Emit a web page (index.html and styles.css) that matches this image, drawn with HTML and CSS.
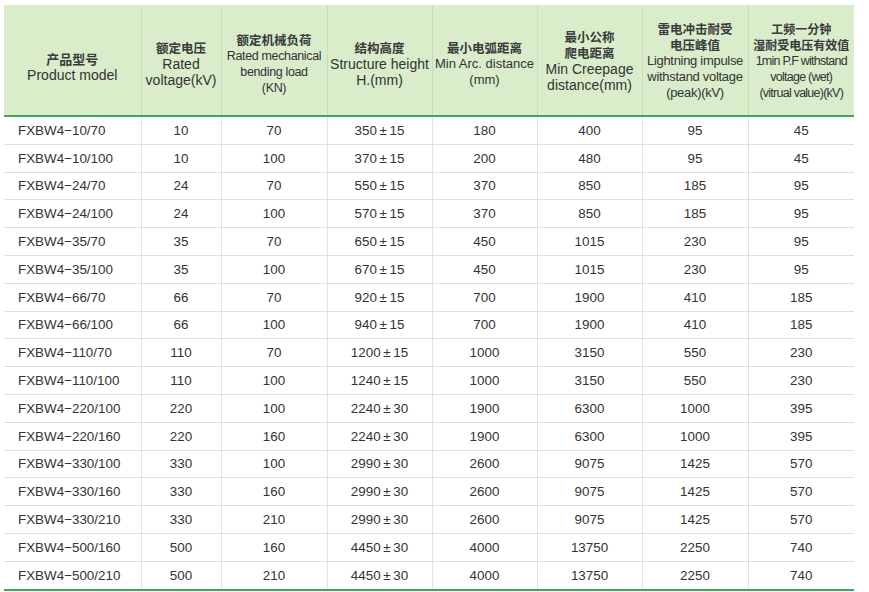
FILE: index.html
```html
<!DOCTYPE html>
<html lang="zh">
<head>
<meta charset="utf-8">
<title>FXBW4</title>
<link rel="stylesheet" href="styles.css">
</head>
<body>
<div class="wrap">
<table class="spec">
  <colgroup>
    <col class="c1"><col class="c2"><col class="c3"><col class="c4"><col class="c5"><col class="c6"><col class="c7"><col class="c8">
  </colgroup>
  <thead>
    <tr>
      <th class="w first"><div class="hd low2"><span class="zh">产品型号</span><span>Product model</span></div></th>
      <th class="w"><div class="hd low1"><span class="zh">额定电压</span><span>Rated</span><span>voltage(kV)</span></div></th>
      <th class="n3"><div class="hd low1"><span class="zh">额定机械负荷</span><span>Rated mechanical</span><span>bending load</span><span>(KN)</span></div></th>
      <th class="w"><div class="hd low1"><span class="zh">结构高度</span><span>Structure height</span><span>H.(mm)</span></div></th>
      <th class="n5"><div class="hd low1"><span class="zh">最小电弧距离</span><span>Min Arc. distance</span><span>(mm)</span></div></th>
      <th class="w"><div class="hd low0"><span class="zh">最小公称</span><span class="zh">爬电距离</span><span>Min Creepage</span><span>distance(mm)</span></div></th>
      <th class="n7"><div class="hd low0"><span class="zh">雷电冲击耐受</span><span class="zh">电压峰值</span><span>Lightning impulse</span><span>withstand voltage</span><span>(peak)(kV)</span></div></th>
      <th class="n8"><div class="hd low0"><span class="zh">工频一分钟</span><span class="zh">湿耐受电压有效值</span><span>1min P.F withstand</span><span>voltage (wet)</span><span>(vitrual value)(kV)</span></div></th>
    </tr>
  </thead>
  <tbody>
    <tr><td>FXBW4−10/70</td><td>10</td><td>70</td><td>350&thinsp;±&thinsp;15</td><td>180</td><td>400</td><td>95</td><td>45</td></tr>
    <tr><td>FXBW4−10/100</td><td>10</td><td>100</td><td>370&thinsp;±&thinsp;15</td><td>200</td><td>480</td><td>95</td><td>45</td></tr>
    <tr><td>FXBW4−24/70</td><td>24</td><td>70</td><td>550&thinsp;±&thinsp;15</td><td>370</td><td>850</td><td>185</td><td>95</td></tr>
    <tr><td>FXBW4−24/100</td><td>24</td><td>100</td><td>570&thinsp;±&thinsp;15</td><td>370</td><td>850</td><td>185</td><td>95</td></tr>
    <tr><td>FXBW4−35/70</td><td>35</td><td>70</td><td>650&thinsp;±&thinsp;15</td><td>450</td><td>1015</td><td>230</td><td>95</td></tr>
    <tr><td>FXBW4−35/100</td><td>35</td><td>100</td><td>670&thinsp;±&thinsp;15</td><td>450</td><td>1015</td><td>230</td><td>95</td></tr>
    <tr><td>FXBW4−66/70</td><td>66</td><td>70</td><td>920&thinsp;±&thinsp;15</td><td>700</td><td>1900</td><td>410</td><td>185</td></tr>
    <tr><td>FXBW4−66/100</td><td>66</td><td>100</td><td>940&thinsp;±&thinsp;15</td><td>700</td><td>1900</td><td>410</td><td>185</td></tr>
    <tr><td>FXBW4−110/70</td><td>110</td><td>70</td><td>1200&thinsp;±&thinsp;15</td><td>1000</td><td>3150</td><td>550</td><td>230</td></tr>
    <tr><td>FXBW4−110/100</td><td>110</td><td>100</td><td>1240&thinsp;±&thinsp;15</td><td>1000</td><td>3150</td><td>550</td><td>230</td></tr>
    <tr><td>FXBW4−220/100</td><td>220</td><td>100</td><td>2240&thinsp;±&thinsp;30</td><td>1900</td><td>6300</td><td>1000</td><td>395</td></tr>
    <tr><td>FXBW4−220/160</td><td>220</td><td>160</td><td>2240&thinsp;±&thinsp;30</td><td>1900</td><td>6300</td><td>1000</td><td>395</td></tr>
    <tr><td>FXBW4−330/100</td><td>330</td><td>100</td><td>2990&thinsp;±&thinsp;30</td><td>2600</td><td>9075</td><td>1425</td><td>570</td></tr>
    <tr><td>FXBW4−330/160</td><td>330</td><td>160</td><td>2990&thinsp;±&thinsp;30</td><td>2600</td><td>9075</td><td>1425</td><td>570</td></tr>
    <tr><td>FXBW4−330/210</td><td>330</td><td>210</td><td>2990&thinsp;±&thinsp;30</td><td>2600</td><td>9075</td><td>1425</td><td>570</td></tr>
    <tr><td>FXBW4−500/160</td><td>500</td><td>160</td><td>4450&thinsp;±&thinsp;30</td><td>4000</td><td>13750</td><td>2250</td><td>740</td></tr>
    <tr><td>FXBW4−500/210</td><td>500</td><td>210</td><td>4450&thinsp;±&thinsp;30</td><td>4000</td><td>13750</td><td>2250</td><td>740</td></tr>
  </tbody>
</table>
</div>
</body>
</html>
```

FILE: styles.css
```css
html, body {
  margin: 0;
  padding: 0;
  background: #ffffff;
}

.wrap {
  padding: 5px 0 0 4px;
}

.spec {
  width: 850px;
  border-collapse: collapse;
  table-layout: fixed;
  font-family: "Liberation Sans", Arial, "Noto Sans CJK SC", sans-serif;
  color: #333333;
}

.c1 { width: 137px; }
.c2 { width: 80px; }
.c3 { width: 106px; }
.c4 { width: 105px; }
.c5 { width: 105px; }
.c6 { width: 105px; }
.c7 { width: 106px; }
.c8 { width: 106px; }

.spec th {
  background: #d9edcb;
  height: 110px;
  padding: 0;
  font-weight: normal;
  text-align: center;
  vertical-align: middle;
  border-left: 1px solid #c9dcbc;
  border-bottom: 2px solid #3fa65a;
  white-space: nowrap;
  overflow: hidden;
  color: #333333;
}

.spec th:first-child { border-left: none; }

.hd {
  display: flex;
  flex-direction: column;
  align-items: center;
}

.hd span {
  display: block;
  height: 16px;
  line-height: 16px;
}

.hd.low0 { padding-top: 2px; }
.hd.low1 { padding-top: 7px; }
.hd.low2 { padding-top: 14px; }

.w { font-size: 14px; }
.n3 { font-size: 12.5px; letter-spacing: -0.35px; }
.n5 { font-size: 13px; }
.n7 { font-size: 13px; letter-spacing: -0.3px; }
.n8 { font-size: 12.5px; letter-spacing: -0.75px; }

.hd .zh {
  font-family: "Noto Sans CJK SC", sans-serif;
  font-weight: 700;
  font-size: 12.5px;
  letter-spacing: 0;
  color: #3a3a3a;
}

.first .hd .zh { font-size: 13px; }
.n8 .hd .zh { font-size: 12px; }

.spec td {
  height: 26.8px;
  padding: 0;
  font-size: 13.4px;
  text-align: center;
  vertical-align: middle;
  border-left: 1px solid #e2e2e2;
  border-bottom: 1px solid #dedede;
  color: #333333;
}

.spec td:first-child {
  border-left: none;
  text-align: left;
  padding-left: 14px;
}

.spec tbody tr:last-child td {
  border-bottom: 2px solid #3fa65a;
}
```
